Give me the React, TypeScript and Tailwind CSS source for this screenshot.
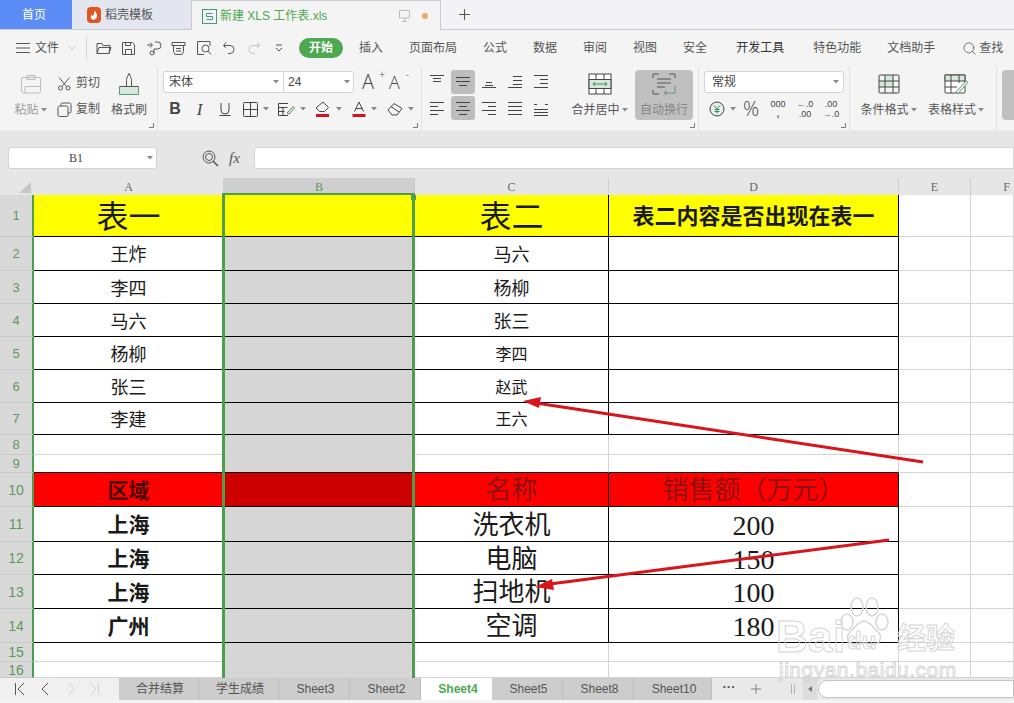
import React from 'react';
import { ChevronDown, Plus, Search } from 'lucide-react';

const Caret = () => (
  <svg width="6" height="4" viewBox="0 0 6 4" className="shrink-0"><path d="M0 0h6L3 3.5z" fill="#8a8a8a" /></svg>
);

const I = ({ w = 18, h = 18, vb, children }: { w?: number; h?: number; vb?: string; children: React.ReactNode }) => (
  <svg width={w} height={h} viewBox={vb ?? `0 0 ${w} ${h}`} fill="none" stroke="currentColor" strokeWidth="1" className="shrink-0">
    {children}
  </svg>
);

const Launcher = () => (
  <svg width="5" height="5" viewBox="0 0 5 5" className="absolute right-[3px] bottom-[2px]"><path d="M4.5 0v4.5H0" stroke="#777" fill="none" /></svg>
);

const AlignIcon = ({ lines }: { lines: [number, number, number][] }) => (
  <I w={16} h={16}>
    {lines.map(([x1, x2, y], i) => (
      <path key={i} d={`M${x1} ${y}.5H${x2}`} />
    ))}
  </I>
);

const ToolCell = ({ children, active }: { children: React.ReactNode; active?: boolean }) => (
  <div className={active ? 'w-[24px] mx-px h-[24px] flex items-center justify-center rounded-[3px] bg-[#bdbdbd] text-[#444]' : 'w-[26px] h-[24px] flex items-center justify-center text-[#444]'}>
    {children}
  </div>
);

const QuickIcons = () => (
  <div className="flex items-center text-[#555]">
    <div className="w-[25px] flex justify-center">
      <I w={16} h={14}><path d="M1 12.5V2.5h5l1 2h7l-1 8zM1 12.5l2-6h12l-2 6" /></I>
    </div>
    <div className="w-[25px] flex justify-center">
      <I w={15} h={15}><path d="M1.5 1.5h10l2 2v10h-12zM4.5 13.5v-5h6v5M4.5 1.5v3h5v-3" /></I>
    </div>
    <div className="w-[25px] flex justify-center">
      <I w={16} h={16}><path d="M1 5h5M4 2.5L6.5 5 4 7.5M9 2h2.5a3.5 3.5 0 0 1 0 7H8v4.5" /><circle cx="6" cy="13" r="2" /></I>
    </div>
    <div className="w-[25px] flex justify-center">
      <I w={15} h={15}><path d="M1 1.5h13v3H1zM2.5 4.5h10v6l-1.5 3h-7l-1.5-3zM5 7.5h5M5 10h5" /></I>
    </div>
    <div className="w-[25px] flex justify-center">
      <I w={16} h={16}><path d="M14 6V1.5H1.5v13H8" /><circle cx="9.5" cy="8.5" r="3.5" /><path d="M12 11l3 3.5" /></I>
    </div>
    <div className="w-[25px] flex justify-center">
      <I w={14} h={14}><path d="M4 1.5L1.5 4.5 4 7M1.5 4.5H8a4 4 0 0 1 0 8H6" /></I>
    </div>
    <div className="w-[25px] flex justify-center text-[#c4c4c4]">
      <I w={14} h={14}><path d="M10 1.5l2.5 3L10 7M12.5 4.5H6a4 4 0 0 0 0 8h2" /></I>
    </div>
    <div className="w-[25px] flex justify-center">
      <I w={10} h={10}><path d="M2 2h6M2 5l3 3 3-3" /></I>
    </div>
  </div>
);

const menus: [string, string][] = [
  ['插入', 'ml-[16px]'],
  ['页面布局', 'ml-[26px]'],
  ['公式', 'ml-[26px]'],
  ['数据', 'ml-[26px]'],
  ['审阅', 'ml-[26px]'],
  ['视图', 'ml-[26px]'],
  ['安全', 'ml-[26px]'],
  ['开发工具', 'ml-[29px]'],
  ['特色功能', 'ml-[29px]'],
  ['文档助手', 'ml-[26px]'],
];

const Big = ({ label, children, caret, w, faded }: { label: string; children: React.ReactNode; caret?: boolean; w: string; faded?: boolean }) => (
  <div className={`${w} flex flex-col items-center pt-[5px]`}>
    <div className="h-[26px] flex items-center justify-center">{children}</div>
    <div className={faded ? 'mt-[5px] flex items-center gap-[2px] text-[12px] leading-4 text-[#9a9a9a] whitespace-nowrap' : 'mt-[5px] flex items-center gap-[2px] text-[12px] leading-4 text-[#555] whitespace-nowrap'}>
      {label}
      {caret && <Caret />}
    </div>
  </div>
);

const FontTool = ({ w, children, caret }: { w: string; children: React.ReactNode; caret?: boolean }) => (
  <div className={`${w} h-[22px] flex items-center justify-center gap-[5px] text-[#444]`}>
    {children}
    {caret && <Caret />}
  </div>
);

const Ribbon = () => (
  <div className="flex h-[64px] bg-[#f4f4f4]">
    {/* clipboard */}
    <div className="relative w-[158px] shrink-0 flex border-r border-[#e2e2e2] pl-[12px]">
      <Big label="粘贴" caret w="w-[37px]" faded>
        <span className="text-[#bdbdbd]">
          <I w={24} h={24}><path d="M4 5.5h16a1.5 1.5 0 0 1 1.5 1.5v12a2 2 0 0 1-2 2h-15a2 2 0 0 1-2-2V7A1.5 1.5 0 0 1 4 5.5zM8 3.5h8v4H8zM6 14.5h15.5M6 14.5V21" /></I>
        </span>
      </Big>
      <div className="ml-[8px] w-[54px] flex flex-col pt-[7px] gap-[6px] text-[12px] text-[#555]">
        <div className="h-[20px] flex items-center gap-[4px]">
          <I w={15} h={15}><circle cx="3.5" cy="12" r="2" /><circle cx="11" cy="12" r="2" /><path d="M5 10.5L12.5 1.5M9.5 10.5L2 1.5" /></I>
          <span>剪切</span>
        </div>
        <div className="h-[20px] flex items-center gap-[4px]">
          <I w={15} h={15}><rect x="1" y="4" width="10" height="10.5" rx="1.5" /><path d="M4 4V2.5A1.5 1.5 0 0 1 5.500 1h7A1.500 1.500 0 0 1 14 2.500v7A1.500 1.500 0 0 1 12.500 11H11" /></I>
          <span>复制</span>
        </div>
      </div>
      <Big label="格式刷" w="w-[36px]">
        <svg width="24" height="24" viewBox="0 0 24 24" fill="none" stroke="#555"><path d="M2.500 14.500h19v8h-19z" fill="#d5e8db" stroke="#5b9b72" /><path d="M2.500 14.500h19M9.500 14.500V8.500c0-2 .5-3 2.500-7 2 4 2.500 5 2.500 7v6" /></svg>
      </Big>
      <Launcher />
    </div>
    {/* font */}
    <div className="relative w-[264px] shrink-0 border-r border-[#e2e2e2] pl-[5px] pt-[5px]">
      <div className="flex items-center h-[22px]">
        <div className="w-[191px] h-[22px] flex bg-white border border-[#d4d4d4] rounded-[3px] text-[12px] text-[#444]">
          <div className="w-[120px] flex items-center justify-between pl-[5px] pr-[4px] border-r border-[#d4d4d4]"><span>宋体</span><Caret /></div>
          <div className="flex-1 flex items-center justify-between pl-[4px] pr-[3px]"><span>24</span><Caret /></div>
        </div>
        <div className="ml-[8px] w-[18px] relative text-[20px] leading-none font-light font-['Open_Sans',sans-serif] text-[#444]">A<span className="absolute -top-[3px] right-[-5px] text-[10px]">+</span></div>
        <div className="ml-[9px] w-[16px] relative text-[18px] leading-none font-light font-['Open_Sans',sans-serif] text-[#444]">A<span className="absolute -top-[3px] right-[-4px] text-[10px]">-</span></div>
      </div>
      <div className="flex mt-[5px]">
        <FontTool w="w-[24px]"><span className="text-[16px] font-bold leading-none">B</span></FontTool>
        <FontTool w="w-[25px]"><span className="text-[17px] italic font-['Liberation_Serif',serif] leading-none">I</span></FontTool>
        <FontTool w="w-[26px]"><I w={14} h={16}><path d="M3 2v7a4 4 0 0 0 8 0V2M1.500 14.500h11" /></I></FontTool>
        <FontTool w="w-[36px]" caret><I w={15} h={15}><rect x="0.500" y="0.500" width="14" height="14" rx="1" /><path d="M7.500 1v13M1 7.500h13" /></I></FontTool>
        <FontTool w="w-[36px]" caret><I w={17} h={15}><path d="M10 1.500H.5v12H10M.5 5.500h9M.5 9.500h6M5 5.500v8" /><path d="M9 11l6-6.500 1.500 1.500-5.500 6z" stroke="#4c8a5c" /></I></FontTool>
        <FontTool w="w-[36px]" caret>
          <svg width="16" height="16" viewBox="0 0 16 16" fill="none" stroke="#444"><path d="M8 1l5.500 5.500-4 4h-5L1 7z" /><rect x="1" y="13" width="13" height="3" fill="#d3141c" stroke="none" /></svg>
        </FontTool>
        <FontTool w="w-[36px]" caret>
          <svg width="14" height="16" viewBox="0 0 14 16" fill="none" stroke="#444"><path d="M2.500 10.500L7 1l4.500 9.500M4 7.500h6" /><rect x="0.500" y="13" width="13" height="3" fill="#d3141c" stroke="none" /></svg>
        </FontTool>
        <FontTool w="w-[36px]" caret><I w={16} h={14}><path d="M1 8l6-6.500 8 5-5 6.500H5zM4 4.500l8 5.500" /></I></FontTool>
      </div>
      <Launcher />
    </div>
    {/* alignment */}
    <div className="relative w-[277px] shrink-0 flex border-r border-[#e2e2e2] pl-[2px]">
      <div className="pt-[4px] w-[130px]">
        <div className="flex">
          <ToolCell><AlignIcon lines={[[1, 15, 1], [4, 12, 4], [4, 12, 7]]} /></ToolCell>
          <ToolCell active><AlignIcon lines={[[1, 15, 3], [1, 15, 7], [4, 12, 11]]} /></ToolCell>
          <ToolCell><AlignIcon lines={[[5, 11, 8], [1, 15, 13], [4, 12, 11]]} /></ToolCell>
          <ToolCell><AlignIcon lines={[[6, 15, 2], [6, 15, 6], [6, 15, 10], [1, 15, 13]]} /></ToolCell>
          <ToolCell><AlignIcon lines={[[1, 15, 1], [7, 15, 5], [7, 15, 9], [1, 15, 13]]} /></ToolCell>
        </div>
        <div className="flex mt-[2px]">
          <ToolCell><AlignIcon lines={[[1, 15, 2], [1, 9, 6], [1, 15, 10], [1, 9, 14]]} /></ToolCell>
          <ToolCell active><AlignIcon lines={[[1, 15, 2], [4, 12, 6], [1, 15, 10], [4, 12, 14]]} /></ToolCell>
          <ToolCell><AlignIcon lines={[[1, 15, 2], [7, 15, 6], [1, 15, 10], [7, 15, 14]]} /></ToolCell>
          <ToolCell><AlignIcon lines={[[1, 15, 2], [1, 15, 6], [1, 15, 10], [1, 15, 14]]} /></ToolCell>
          <ToolCell><AlignIcon lines={[[1, 15, 9], [1, 15, 12], [1, 15, 15], [1, 4, 4], [12, 15, 4]]} /></ToolCell>
        </div>
      </div>
      <div className="ml-[17px]">
        <Big label="合并居中" caret w="w-[57px]">
          <svg width="24" height="22" viewBox="0 0 24 22" fill="none" stroke="#444"><rect x="1" y="1" width="22" height="20" fill="#fff" /><rect x="1" y="6.500" width="22" height="9" fill="#d5e8db" stroke="#444" /><path d="M8 1v5.500M16 1v5.500M8 15.500V21M16 15.500V21" /><path d="M5 11h14M7 9l-2 2 2 2M17 9l2 2-2 2" stroke="#3d8b5b" /></svg>
        </Big>
      </div>
      <div className="ml-[7px] w-[58px] h-[50px] mt-[4px] rounded-[4px] bg-[#c0c0c0] flex flex-col items-center">
        <div className="mt-[1px] h-[26px] flex items-center">
          <svg width="24" height="22" viewBox="0 0 24 22" fill="none" stroke="#555"><path d="M1 5V1h6M17 1h6v4M1 17v4h6" /><path d="M5 6h14M5 10h14M5 14h8" /><path d="M12 20h11v-7M15 18l-3 2 3 2" stroke="#5f9b72" /></svg>
        </div>
        <span className="mt-[5px] text-[12px] leading-4 text-[#858585] whitespace-nowrap">自动换行</span>
      </div>
      <Launcher />
    </div>
    {/* number */}
    <div className="relative w-[151px] shrink-0 border-r border-[#e2e2e2] pl-[5px] pt-[5px]">
      <div className="w-[140px] h-[22px] flex items-center justify-between bg-white border border-[#d4d4d4] rounded-[3px] pl-[7px] pr-[4px] text-[12px] text-[#444]">
        <span>常规</span><Caret />
      </div>
      <div className="flex items-center h-[24px] mt-[4px] text-[#444]">
        <div className="w-[32px] pl-[5px] flex items-center gap-[5px]">
          <svg width="16" height="16" viewBox="0 0 16 16" fill="none" stroke="#444"><circle cx="8" cy="8" r="7" fill="#e7f1ea" /><path d="M5 4.500l3 3.500 3-3.500M8 8v4.500M5.500 8.500h5M5.500 10.500h5" stroke="#3d8b5b" /></svg>
          <Caret />
        </div>
        <div className="w-[30px] text-center text-[20px] font-light font-['Open_Sans',sans-serif] leading-none">%</div>
        <div className="w-[24px] flex flex-col items-center text-[9px] leading-[10px]"><span>000</span><span className="font-bold">,</span></div>
        <div className="w-[30px] flex flex-col items-center text-[9px] leading-[10px]"><span><span className="text-[#3d8b5b]">←</span>.0</span><span>.00</span></div>
        <div className="w-[22px] flex flex-col items-center text-[9px] leading-[10px]"><span>.00</span><span><span className="text-[#3d8b5b]">→</span>.0</span></div>
      </div>
      <Launcher />
    </div>
    {/* styles */}
    <div className="w-[147px] shrink-0 flex border-r border-[#e2e2e2] pl-[10px]">
      <Big label="条件格式" caret w="w-[57px]">
        <svg width="22" height="20" viewBox="0 0 22 20" fill="none" stroke="#444"><rect x="7" y="1" width="8" height="6" fill="#d5e8db" stroke="none" /><rect x="1" y="7" width="14" height="6" fill="#d5e8db" stroke="none" /><rect x="1" y="1" width="20" height="18" rx="1" /><path d="M1 7h20M1 13h20M7 1v18M15 1v18" /></svg>
      </Big>
      <div className="ml-[11px]">
        <Big label="表格样式" caret w="w-[56px]">
          <svg width="24" height="20" viewBox="0 0 24 20" fill="none" stroke="#444"><rect x="1" y="1" width="20" height="18" rx="1" fill="#fff" /><rect x="1" y="1" width="20" height="6" fill="#d5e8db" /><path d="M1 13h12M7 1v18M15 1v8" /><path d="M12 18l10-11 2 1.500-10 11z" fill="#f4f4f4" stroke="#5f9b72" /></svg>
        </Big>
      </div>
    </div>
    <div className="flex-1 pl-[5px] pt-[4px]">
      <div className="w-full h-[50px] rounded-l-[4px] bg-[#c0c0c0]" />
    </div>
  </div>
);

type Row = {
  n: number;
  a?: string;
  c?: string;
  d?: string;
  table: boolean;
  line?: boolean;
  bg?: string;
  bbg?: string;
  ac?: string;
  cc?: string;
  dc?: string;
};

const serif = "font-['Liberation_Serif','Noto_Sans_CJK_SC',serif]";
const rows: Row[] = [
  { n: 1, a: '表一', c: '表二', d: '表二内容是否出现在表一', table: true, bg: 'bg-[#ffff00]', bbg: 'bg-[#ffff00]', ac: 'text-[32px]', cc: 'text-[32px]', dc: 'text-[22px] font-bold' },
  { n: 2, a: '王炸', c: '马六', table: true, ac: 'text-[18px]', cc: 'text-[18px]' },
  { n: 3, a: '李四', c: '杨柳', table: true, ac: 'text-[18px]', cc: 'text-[18px]' },
  { n: 4, a: '马六', c: '张三', table: true, ac: 'text-[18px]', cc: 'text-[18px]' },
  { n: 5, a: '杨柳', c: '李四', table: true, ac: 'text-[18px]', cc: 'text-[16px]' },
  { n: 6, a: '张三', c: '赵武', table: true, ac: 'text-[18px]', cc: 'text-[16px]' },
  { n: 7, a: '李建', c: '王六', table: true, ac: 'text-[18px]', cc: 'text-[16px]' },
  { n: 8, table: false },
  { n: 9, table: false, line: true },
  { n: 10, a: '区域', c: '名称', d: '销售额（万元）', table: true, bg: 'bg-[#ff0000]', bbg: 'bg-[#cc0000]', ac: 'text-[21px] font-bold text-[#4a0505]', cc: 'text-[26px] text-[#8f1010]', dc: 'text-[26px] text-[#8f1010]' },
  { n: 11, a: '上海', c: '洗衣机', d: '200', table: true, ac: 'text-[21px] font-bold', cc: 'text-[26px]', dc: 'text-[28px]' },
  { n: 12, a: '上海', c: '电脑', d: '150', table: true, ac: 'text-[21px] font-bold', cc: 'text-[26px]', dc: 'text-[28px]' },
  { n: 13, a: '上海', c: '扫地机', d: '100', table: true, ac: 'text-[21px] font-bold', cc: 'text-[26px]', dc: 'text-[28px]' },
  { n: 14, a: '广州', c: '空调', d: '180', table: true, ac: 'text-[21px] font-bold', cc: 'text-[26px]', dc: 'text-[28px]' },
  { n: 15, table: false },
  { n: 16, table: false },
];

const cellBase = 'flex items-center justify-center overflow-hidden whitespace-nowrap leading-none text-[#1a1a1a] border-r border-b pt-[3px]';

const Sheet = () => (
  <div className="relative grid grid-cols-[34px_190px_191px_194px_290px_72px_43px] grid-rows-[17px_42px_34px_33px_33px_33px_33px_32px_20px_18px_34px_35px_33px_34px_34px_19px_16px] h-[500px] bg-white">
    <div className="bg-[#e6e6e6] relative">
      <svg width="12" height="11" viewBox="0 0 12 11" className="absolute left-[19px] top-[4px]"><path d="M12 0v11H0z" fill="#c6c6c6" /></svg>
    </div>
    {['A', 'B', 'C', 'D', 'E', 'F'].map((l) => (
      <div
        key={l}
        className={
          l === 'B'
            ? `bg-[#cfcfcf] text-[#5a9a5a] text-[12px] flex items-center justify-center border-r border-[#c4c4c4] ${serif}`
            : l === 'F'
              ? `bg-[#e6e6e6] text-[#666] text-[12px] flex items-center justify-end pr-[4px] ${serif}`
              : `bg-[#e6e6e6] text-[#666] text-[12px] flex items-center justify-center border-r border-[#cfcfcf] ${serif}`
        }
      >
        {l}
      </div>
    ))}
    {rows.map((r) => {
      const bdr = r.table ? 'border-black' : 'border-[#d4d4d4]';
      const bot = r.table || r.line ? 'border-b-black' : 'border-b-[#d4d4d4]';
      return (
        <React.Fragment key={r.n}>
          <div className={r.n > 9 ? 'bg-[#d9d9d9] border-r-2 border-r-[#4f9e4f] border-b border-b-[#c9c9c9] flex items-center justify-center text-[14px] leading-none text-[#5a9a5a]' : 'bg-[#d9d9d9] border-r-2 border-r-[#4f9e4f] border-b border-b-[#c9c9c9] flex items-center justify-center text-[13px] leading-none text-[#5a9a5a]'}>
            {r.n}
          </div>
          <div className={`${cellBase} ${serif} ${bdr} ${bot} ${r.bg ?? ''} ${r.ac ?? ''}`}>{r.a}</div>
          <div className={`${cellBase} ${bdr} ${bot} ${r.bbg ?? 'bg-[#d6d6d6]'}`} />
          <div className={`${cellBase} ${serif} ${bdr} ${bot} ${r.bg ?? ''} ${r.cc ?? ''}`}>{r.c}</div>
          <div className={`${cellBase} ${serif} ${bdr} ${bot} ${r.bg ?? ''} ${r.dc ?? ''}`}>{r.d}</div>
          <div className={`${cellBase} border-[#d4d4d4]`} />
          <div className={`${cellBase} border-[#d4d4d4]`} />
        </React.Fragment>
      );
    })}
    {/* selection frame */}
    <div className="absolute left-[222px] top-[15px] bottom-0 w-[193px] border-x-[3px] border-t-2 border-[#4f9e4f] pointer-events-none" />
    <div className="absolute left-[411px] top-[17px] w-[5px] h-[5px] bg-[#4f9e4f]" />
  </div>
);

const tabs: [string, string][] = [
  ['合并结算', 'w-[80px]'],
  ['学生成绩', 'w-[80px]'],
  ['Sheet3', 'w-[71px]'],
  ['Sheet2', 'w-[71px]'],
  ['Sheet4', 'w-[71px]'],
  ['Sheet5', 'w-[71px]'],
  ['Sheet8', 'w-[71px]'],
  ['Sheet10', 'w-[78px]'],
];

const SheetTabs = () => (
  <div className="h-[22px] flex bg-[#e9e9e9] text-[12px]">
    <div className="w-[119px] flex items-center bg-[#f0f0f0] text-[#555] pl-[14px]">
      <I w={12} h={14}><path d="M1.500 1v12M10 1L4 7l6 6" /></I>
      <span className="ml-[14px] flex"><I w={10} h={14}><path d="M8 1L2 7l6 6" /></I></span>
      <span className="ml-[16px] flex text-[#d4d4d4]"><I w={10} h={14}><path d="M2 1l6 6-6 6" /></I></span>
      <span className="ml-[12px] flex text-[#d4d4d4]"><I w={12} h={14}><path d="M2 1l6 6-6 6M10.500 1v12" /></I></span>
    </div>
    {tabs.map(([t, w]) =>
      t === 'Sheet4' ? (
        <div key={t} className={`${w} flex items-center justify-center pl-[3px] bg-white font-bold text-[#4da84f]`}>{t}</div>
      ) : (
        <div key={t} className={`${w} flex items-center justify-center pl-[3px] bg-[#cdcdcd] border-r border-[#bdbdbd] text-[#555]`}>{t}</div>
      ),
    )}
    <div className="ml-[10px] w-[14px] text-center text-[#555] text-[13px] font-bold leading-[18px]">···</div>
    <div className="ml-[12px] flex items-center text-[#555]"><Plus size={16} strokeWidth={1} /></div>
    <div className="ml-[27px] flex items-center gap-[2px]">
      <span className="w-px h-[10px] bg-[#b5b5b5]" />
      <span className="w-px h-[10px] bg-[#b5b5b5]" />
    </div>
    <div className="ml-[8px] w-[14px] flex items-center justify-center bg-[#dcdcdc]">
      <svg width="4" height="6" viewBox="0 0 4 6"><path d="M4 0v6L0 3z" fill="#777" /></svg>
    </div>
    <div className="flex-1 my-[2px] ml-[1px] bg-white border border-[#c4c4c4] rounded-l-[9px]" />
  </div>
);

const Watermark = () => (
  <div className="absolute left-[776px] top-[596px] w-[190px] h-[90px] pointer-events-none font-['Liberation_Sans',sans-serif]">
    <span className="absolute left-0 top-[19px] text-[44px] leading-none font-bold text-transparent [-webkit-text-stroke:1px_#d6d6d6]">Ba</span>
    <span className="absolute left-[57px] top-[19px] text-[44px] leading-none font-bold text-transparent [-webkit-text-stroke:1px_#d6d6d6]">i</span>
    <svg width="50" height="56" viewBox="0 0 50 56" fill="none" stroke="#d6d6d6" strokeWidth="1.500" className="absolute left-[63px] top-0">
      <ellipse cx="8" cy="26" rx="6" ry="8" />
      <ellipse cx="18" cy="11" rx="6" ry="9" />
      <ellipse cx="33" cy="11" rx="6" ry="9" />
      <ellipse cx="43" cy="26" rx="6" ry="8" />
      <path d="M25 25c6 0 9 7 14 11 5 5 2 13-6 12-3 0-5-1-8-1s-5 1-8 1c-8 1-11-7-6-12 5-4 8-11 14-11z" />
    </svg>
    <span className="absolute left-[71px] top-[33px] text-[24px] leading-none font-bold text-transparent [-webkit-text-stroke:1px_#d6d6d6]">du</span>
    <span className="absolute left-[121px] top-[26px] text-[29px] leading-none font-bold text-transparent font-['Noto_Sans_CJK_SC',sans-serif] [-webkit-text-stroke:1px_#d6d6d6]">经验</span>
    <span className="absolute left-[3px] top-[63px] text-[21px] leading-none text-transparent tracking-[0.5px] [-webkit-text-stroke:1px_#d6d6d6]">jingyan.baidu.com</span>
  </div>
);

export default function App() {
  return (
    <div className="relative w-[1014px] h-[703px] overflow-hidden bg-[#f4f4f4] font-['Liberation_Sans','Noto_Sans_CJK_SC',sans-serif]">
      {/* window tabs */}
      <div className="h-[30px] flex bg-[#f3f3f5] border-b border-[#c9c9d2] text-[12px]">
        <div className="w-[72px] flex items-center justify-center pr-[4px] pt-[1px] bg-[#5c8df6] text-white">首页</div>
        <div className="w-[119px] flex items-center pl-[15px] pt-[1px] bg-[#e3e6ee] text-[#555]">
          <svg width="14" height="16" viewBox="0 0 14 16"><rect width="14" height="16" rx="4" fill="#e2551f" /><path d="M8 3c0 3 3 3.500 2 7-.5 2-3 3.500-5 2.500C3.500 11.500 3.500 9 4.500 7.500c.5 1 1 1.500 1.500 1.500C7 7.500 7 5 8 3z" fill="#fff" /></svg>
          <span className="ml-[4px]">稻壳模板</span>
        </div>
        <div className="w-[250px] h-[30px] flex items-center pl-[10px] pt-[1px] bg-[#f4f4f4] border-x border-t border-[#c9c9d2] text-[#4da84f]">
          <svg width="15" height="15" viewBox="0 0 15 15" fill="none" stroke="#3f9d7f"><rect x="0.500" y="0.500" width="14" height="14" /><path d="M10.500 4.500h-6v3h6v3h-6" /></svg>
          <span className="ml-[3px] whitespace-nowrap">新建 XLS 工作表.xls</span>
          <span className="ml-[72px] flex text-[#bbb]"><I w={11} h={12}><path d="M.5.500h10v7.500H.5zM5.500 8v3.500M3 11.500h5" /></I></span>
          <span className="ml-[12px] w-[6px] h-[6px] rounded-full bg-[#eea862]" />
        </div>
        <div className="ml-[15px] flex items-center text-[#555]"><Plus size={17} strokeWidth={1.5} /></div>
      </div>
      {/* menu row */}
      <div className="h-[36px] flex items-center text-[12px] text-[#555] bg-[#f4f4f4]">
        <div className="ml-[16px] flex items-center gap-[5px]">
          <svg width="14" height="10" viewBox="0 0 14 10" stroke="#555" fill="none"><path d="M0 .500h14M0 5h14M0 9.500h14" /></svg>
          <span>文件</span>
          <ChevronDown size={12} strokeWidth={1} className="ml-[2px] text-[#999]" />
        </div>
        <div className="ml-[8px] mr-[4px] w-px h-[24px] bg-[#d6d6d6]" />
        <QuickIcons />
        <div className="ml-[8px] w-[44px] h-[20px] flex items-center justify-center rounded-full bg-[#4da84f] text-white font-bold">开始</div>
        {menus.map(([m, ml]) => (
          <span key={m} className={`${ml} whitespace-nowrap ${m === '开发工具' ? 'text-[#333]' : ''}`}>{m}</span>
        ))}
        <div className="ml-[27px] flex items-center gap-[2px]">
          <Search size={15} strokeWidth={1.25} />
          <span>查找</span>
        </div>
      </div>
      <Ribbon />
      {/* formula bar */}
      <div className="h-[48px] flex items-start pt-[15px] bg-[#e6e6e6] border-t-[2px] border-[#e9e9e9]">
        <div className={`ml-[8px] w-[149px] h-[22px] flex items-center bg-white border border-[#d4d4d4] rounded-[3px] text-[12px] text-[#444] ${serif}`}>
          <span className="flex-1 text-center pr-[4px]">B1</span>
          <span className="pr-[3px]"><Caret /></span>
        </div>
        <div className="ml-[45px] h-[22px] flex items-center text-[#555]">
          <svg width="17" height="17" viewBox="0 0 17 17" fill="none" stroke="#555"><circle cx="7" cy="7" r="6" /><circle cx="7" cy="7" r="3.500" /><path d="M11 11l5 5" strokeWidth="1.500" /></svg>
        </div>
        <div className={`ml-[10px] w-[16px] h-[22px] flex items-center text-[15px] italic text-[#555] ${serif}`}>fx</div>
        <div className="ml-[9px] flex-1 h-[22px] bg-white border border-[#d4d4d4] rounded-l-[3px]" />
      </div>
      <Sheet />
      <SheetTabs />
      {/* annotation arrows */}
      <svg width="1014" height="703" className="absolute inset-0 pointer-events-none" fill="none">
        <path d="M923 462L536 403" stroke="#d9141a" strokeWidth="3" />
        <path d="M523 401L541 397L539 408z" fill="#d9141a" />
        <path d="M889 540L550 584" stroke="#d9141a" strokeWidth="3" />
        <path d="M535 587L552 579L554 590z" fill="#d9141a" />
      </svg>
      <Watermark />
    </div>
  );
}
